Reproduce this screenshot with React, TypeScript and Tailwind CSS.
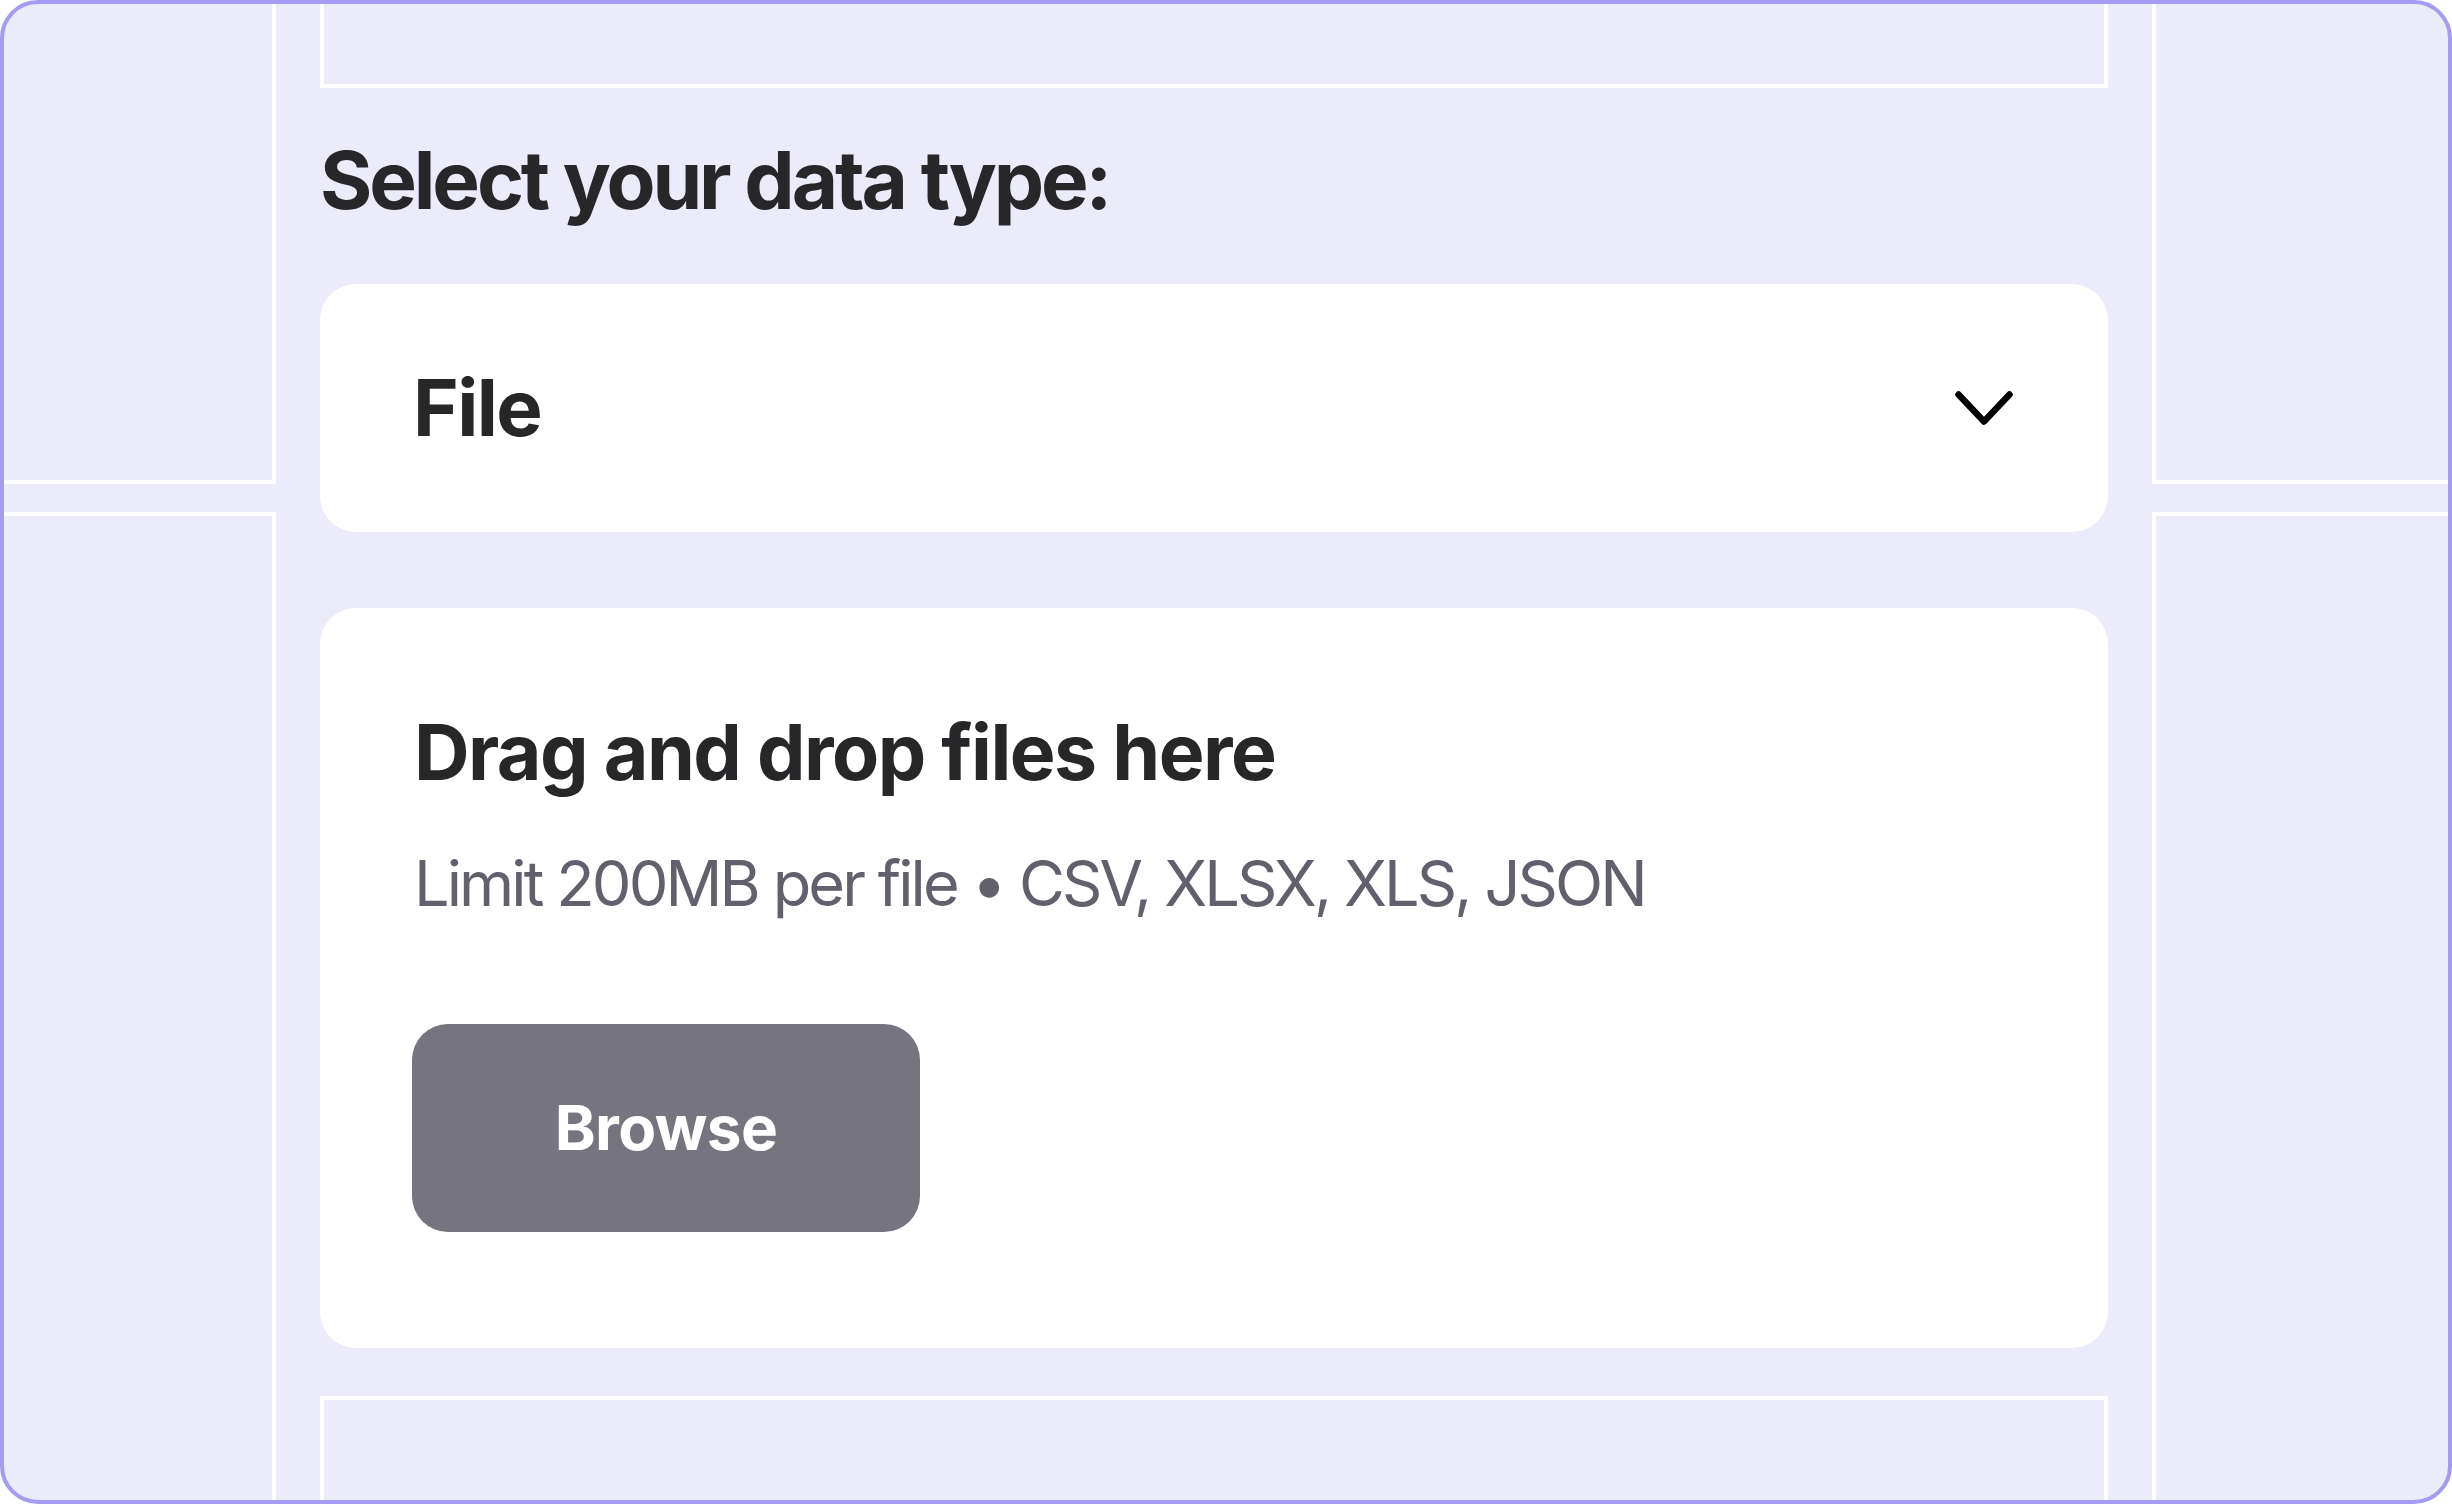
import React from "react";

function Chevron() {
  return (
    <svg width="58" height="35" viewBox="0 0 58 35" fill="none" aria-hidden="true">
      <polyline
        points="3.5,3.5 29,30.5 54.5,3.5"
        stroke="#000000"
        strokeWidth="6.5"
        strokeLinecap="round"
        strokeLinejoin="round"
      />
    </svg>
  );
}

export default function App() {
  return (
    <div
      className="h-screen w-full overflow-hidden rounded-[38px] border-[4px] border-[#a59bf0] bg-[#ebebfa]"
      style={{ fontFamily: "Inter, 'Liberation Sans', sans-serif" }}
    >
      <div className="grid h-full grid-cols-[272px_1788px_1fr] gap-x-[44px]">
        {/* left column */}
        <div className="flex flex-col">
          <div className="h-[480px] border-b-4 border-r-4 border-white" />
          <div className="mt-[28px] flex-1 border-r-4 border-t-4 border-white" />
        </div>

        {/* center column */}
        <div className="flex flex-col">
          <div className="h-[84px] border-x-4 border-b-4 border-white" />

          <h1 className="mt-[52px] h-[80px] text-[80px] font-bold leading-[80px] tracking-[-0.039em] text-[#27272a]">
            Select your data type:
          </h1>

          <div className="mt-[64px] flex h-[248px] items-center justify-between rounded-[36px] bg-white pl-[93px] pr-[95px]">
            <span className="text-[78px] font-bold leading-[78px] tracking-[-0.02em] text-[#27272a]">
              File
            </span>
            <Chevron />
          </div>

          <div className="mt-[76px] flex h-[740px] flex-col items-start rounded-[36px] bg-white pl-[94px] pt-[106px]">
            <h2 className="text-[77px] font-bold leading-[77px] tracking-[-0.02em] text-[#27272a]">
              Drag and drop files here
            </h2>
            <p className="mt-[61px] text-[63px] font-normal leading-[63px] tracking-[-0.046em] text-[#61606c]">
              Limit 200MB per file • CSV, XLSX, XLS, JSON
            </p>
            <button className="ml-[-2px] mt-[109px] flex h-[208px] w-[508px] items-center justify-center rounded-[36px] bg-[#76757f] text-[62px] font-bold leading-[62px] tracking-[-0.01em] text-white">
              Browse
            </button>
          </div>

          <div className="mt-[48px] flex-1 border-x-4 border-t-4 border-white" />
        </div>

        {/* right column */}
        <div className="flex flex-col">
          <div className="h-[480px] border-b-4 border-l-4 border-white" />
          <div className="mt-[28px] flex-1 border-l-4 border-t-4 border-white" />
        </div>
      </div>
    </div>
  );
}
